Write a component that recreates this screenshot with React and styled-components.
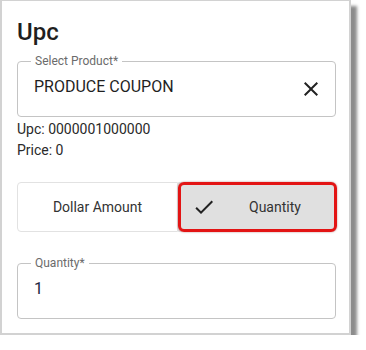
import React, { useState } from "react";
import styled, { createGlobalStyle } from "styled-components";

const Global = createGlobalStyle`
  html, body {
    margin: 0;
    padding: 0;
    background: #ffffff;
  }
  body {
    font-family: Roboto, "Liberation Sans", sans-serif;
  }
`;

const Panel = styled.div`
  box-sizing: border-box;
  width: 351px;
  height: 335px;
  background: #fff;
  border: 2px solid #d2d2d2;
  border-top-width: 1px;
  box-shadow: 6px 6px 3px rgba(0, 0, 0, 0.45);
  padding: 15px 13px 0 15px;
  display: flex;
  flex-direction: column;
`;

const Title = styled.h2`
  margin: 0;
  font-size: 24px;
  line-height: 32px;
  font-weight: 500;
  color: #1f1f1f;
`;

const Field = styled.div`
  position: relative;
  box-sizing: border-box;
  height: 56px;
  margin-top: ${(p) => p.$top}px;
  border: 1px solid #c4c4c4;
  border-radius: 4px;
  display: flex;
  align-items: center;
  padding: 0 12px 4px 16px;
`;

const Label = styled.span`
  position: absolute;
  top: -8px;
  left: 13px;
  padding: 0 4px;
  background: #fff;
  font-size: 12px;
  line-height: 14px;
  color: #6b6b6b;
`;

const Value = styled.div`
  flex: 1;
  font-size: 16px;
  line-height: 20px;
  color: ${(p) => p.$color || "#1f1f1f"};
`;

const IconButton = styled.button`
  border: 0;
  background: none;
  padding: 0;
  margin: 4px 0 0 0;
  width: 24px;
  height: 24px;
  display: flex;
  color: #222;
  cursor: pointer;
`;

const Info = styled.div`
  margin-top: ${(p) => p.$top || 0}px;
  font-size: 14px;
  line-height: 21px;
  color: #2a2a2a;
`;

const Group = styled.div`
  margin-top: 21px;
  display: grid;
  grid-template-columns: 161px 1fr;
  height: 50px;
`;

const Toggle = styled.button`
  position: relative;
  box-sizing: border-box;
  border: 1px solid #e2e2e2;
  background: ${(p) => (p.$selected ? "#e0e0e0" : "#fff")};
  border-radius: ${(p) => (p.$first ? "4px 0 0 4px" : "0 4px 4px 0")};
  font-family: inherit;
  font-size: 14px;
  color: #333;
  display: flex;
  align-items: center;
  justify-content: center;
  padding: 0;
  cursor: pointer;

  ${(p) =>
    p.$selected &&
    `
    justify-content: flex-start;
    padding-left: 13px;
    &::after {
      content: "";
      position: absolute;
      inset: -1px -2px -1px -1px;
      border: 3px solid #e31414;
      border-radius: 6px;
      box-shadow: 0 0 2px rgba(120, 0, 0, 0.5);
      pointer-events: none;
    }
  `}
`;

const ToggleText = styled.span`
  margin-left: ${(p) => p.$gap || 0}px;
`;

const CloseIcon = () => (
  <svg width="24" height="24" viewBox="0 0 24 24" fill="currentColor">
    <path d="M19 6.41 17.59 5 12 10.59 6.41 5 5 6.41 10.59 12 5 17.59 6.41 19 12 13.41 17.59 19 19 17.59 13.41 12z" />
  </svg>
);

const CheckIcon = () => (
  <svg width="24" height="24" viewBox="0 0 24 24" fill="#222">
    <path d="M9 16.17 4.83 12l-1.42 1.41L9 19 21 7l-1.41-1.41z" />
  </svg>
);

export default function App() {
  const [mode, setMode] = useState("quantity");

  return (
    <>
      <Global />
      <Panel>
        <Title>Upc</Title>

        <Field $top={13}>
          <Label>Select Product*</Label>
          <Value>PRODUCE COUPON</Value>
          <IconButton aria-label="clear">
            <CloseIcon />
          </IconButton>
        </Field>

        <Info $top={2}>Upc: 0000001000000</Info>
        <Info>Price: 0</Info>

        <Group>
          <Toggle $first $selected={mode === "dollar"} onClick={() => setMode("dollar")}>
            Dollar Amount
          </Toggle>
          <Toggle $selected={mode === "quantity"} onClick={() => setMode("quantity")}>
            {mode === "quantity" && <CheckIcon />}
            <ToggleText $gap={mode === "quantity" ? 33 : 0}>Quantity</ToggleText>
          </Toggle>
        </Group>

        <Field $top={31}>
          <Label>Quantity*</Label>
          <Value $color="#1c2740">1</Value>
        </Field>
      </Panel>
    </>
  );
}
